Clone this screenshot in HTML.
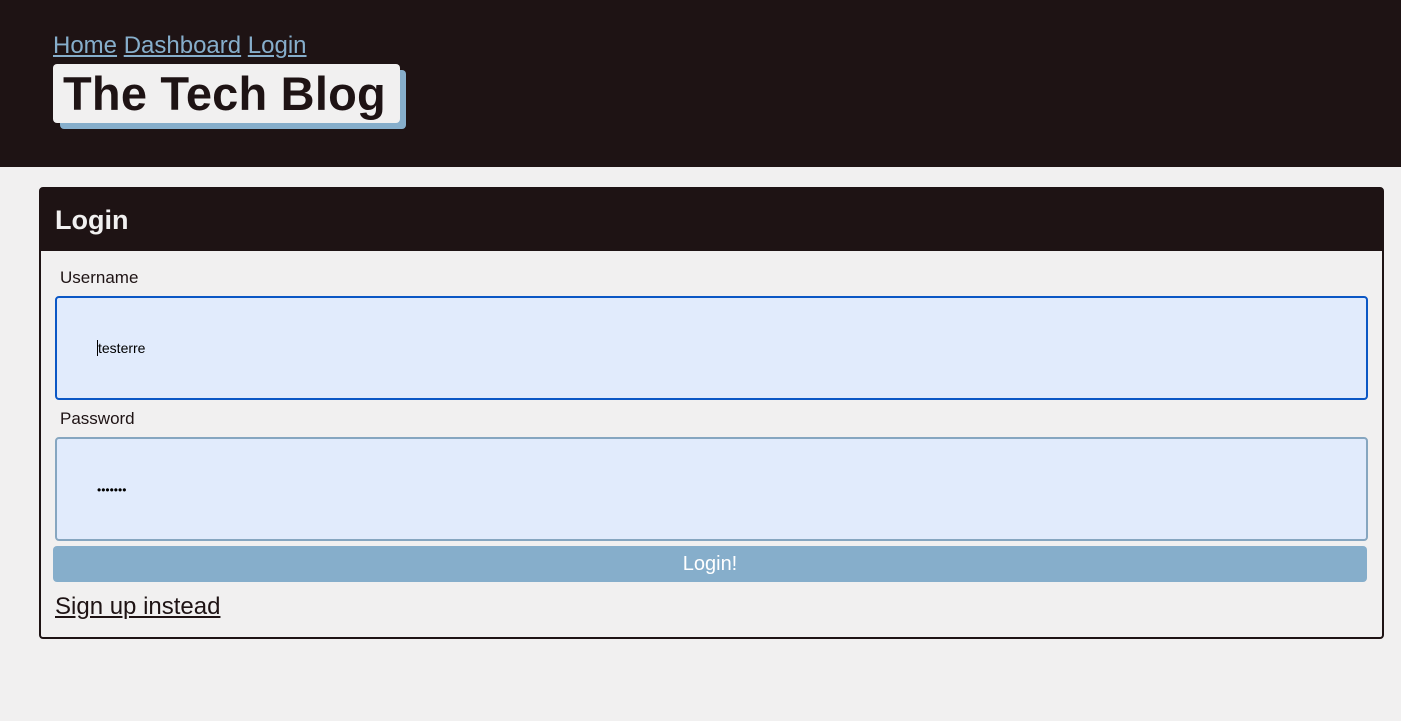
<!DOCTYPE html>
<html><head><style>
*{box-sizing:border-box;margin:0;padding:0}
body{width:1401px;height:721px;background:#f1f0f0;font-family:"Liberation Sans",sans-serif;position:relative;overflow:hidden}
header{position:absolute;left:0;top:0;width:1401px;height:167px;background:#1e1314}
nav{position:absolute;left:53px;top:32px;font-size:24px}
nav a{color:#86aecb;text-decoration:underline}
.shadow{position:absolute;left:60px;top:70px;width:346px;height:59px;background:#86aecb;border-radius:4px}
.title{position:absolute;left:53px;top:64px;width:347px;height:59px;background:#f1f0f0;border-radius:4px;font-weight:bold;font-size:47px;color:#1e1314;padding-left:10px;line-height:59px;letter-spacing:0.2px}
.card{position:absolute;left:39px;top:187px;width:1345px;height:452px;border:2px solid #1e1314;border-radius:4px}
.ch{position:absolute;left:0;top:0;width:1341px;height:62px;background:#1e1314;color:#f1f0f0;font-weight:bold;font-size:27px;padding:16px 0 0 14px}
.lbl{position:absolute;left:19px;font-size:17px;color:#1e1314}
.inp{position:absolute;left:14px;width:1313px;height:104px;background:#e1ebfc;border-radius:4px;font-size:14px;padding:42px 0 0 40px}
.btn{position:absolute;left:12px;top:357px;width:1314px;height:36px;background:#86aecb;border-radius:4px;color:#fff;font-size:20px;text-align:center;line-height:36px}
.su{position:absolute;left:14px;top:404px;font-size:24px;color:#1e1314;text-decoration:underline}
</style></head><body>
<header>
<nav><a>Home</a> <a>Dashboard</a> <a>Login</a></nav>
<div class="shadow"></div>
<div class="title">The Tech Blog</div>
</header>
<div class="card">
<div class="ch">Login</div>
<div class="lbl" style="top:79px">Username</div>
<div class="inp" style="top:107px;border:2px solid #0b57c5"><span style="border-left:1px solid #000">testerre</span></div>
<div class="lbl" style="top:220px">Password</div>
<div class="inp" style="top:248px;border:2px solid #86a6c0;font-size:12px;padding-top:44px">•••••••</div>
<div class="btn">Login!</div>
<div class="su">Sign up instead</div>
</div>
</body></html>
